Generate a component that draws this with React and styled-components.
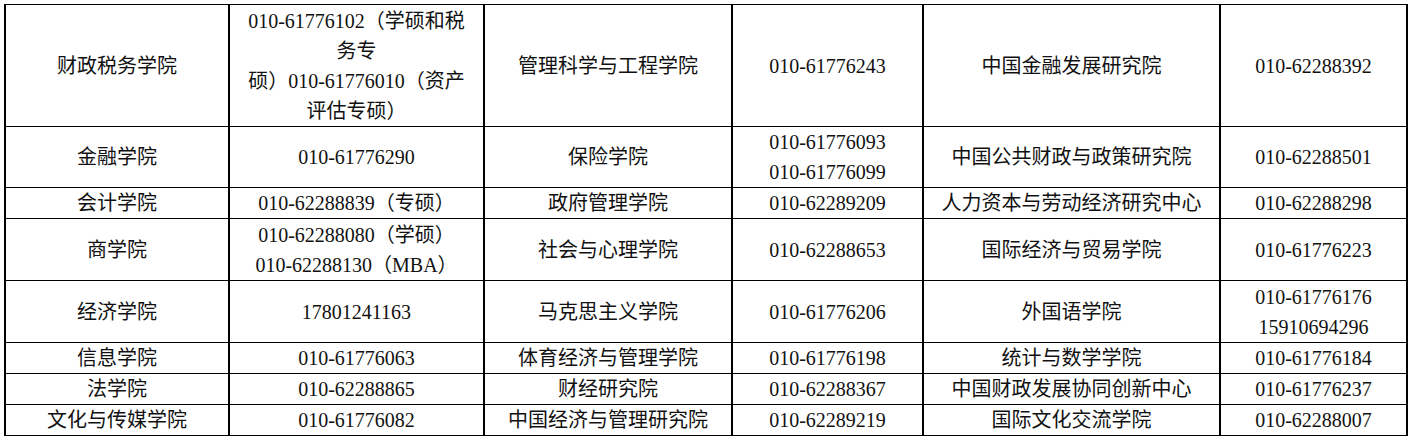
import React from "react";
import styled, { createGlobalStyle } from "styled-components";

const Global = createGlobalStyle`
  html, body { margin: 0; padding: 0; background: #fff; }
  body { font-family: "Liberation Serif", "Noto Sans CJK SC", serif; }
`;

const Page = styled.div`
  padding: 4px 0 0 4px;
`;

const Table = styled.table`
  border-collapse: collapse;
  table-layout: fixed;
  width: 1404px;
  font-size: 20px;
  line-height: 30px;
  color: #111;
`;

const Row = styled.tr`
  height: ${(p) => p.$h}px;
`;

const Cell = styled.td`
  padding: 0;
  text-align: center;
  vertical-align: middle;
  border-top: 1px solid #000;
  border-bottom: 1px solid #000;
  border-left: 2px solid #000;
  border-right: 2px solid #000;
  white-space: nowrap;
`;

const widths = [224, 255, 248, 191, 297, 187];

const rows = [
  {
    h: 122,
    cells: [
      "财政税务学院",
      ["010-61776102（学硕和税", "务专", "硕）010-61776010（资产", "评估专硕）"],
      "管理科学与工程学院",
      "010-61776243",
      "中国金融发展研究院",
      "010-62288392",
    ],
  },
  {
    h: 61,
    cells: [
      "金融学院",
      "010-61776290",
      "保险学院",
      ["010-61776093", "010-61776099"],
      "中国公共财政与政策研究院",
      "010-62288501",
    ],
  },
  {
    h: 31,
    cells: [
      "会计学院",
      "010-62288839（专硕）",
      "政府管理学院",
      "010-62289209",
      "人力资本与劳动经济研究中心",
      "010-62288298",
    ],
  },
  {
    h: 62,
    cells: [
      "商学院",
      ["010-62288080（学硕）", "010-62288130（MBA）"],
      "社会与心理学院",
      "010-62288653",
      "国际经济与贸易学院",
      "010-61776223",
    ],
  },
  {
    h: 62,
    cells: [
      "经济学院",
      "17801241163",
      "马克思主义学院",
      "010-61776206",
      "外国语学院",
      ["010-61776176", "15910694296"],
    ],
  },
  {
    h: 30,
    cells: [
      "信息学院",
      "010-61776063",
      "体育经济与管理学院",
      "010-61776198",
      "统计与数学学院",
      "010-61776184",
    ],
  },
  {
    h: 31,
    cells: [
      "法学院",
      "010-62288865",
      "财经研究院",
      "010-62288367",
      "中国财政发展协同创新中心",
      "010-61776237",
    ],
  },
  {
    h: 31,
    cells: [
      "文化与传媒学院",
      "010-61776082",
      "中国经济与管理研究院",
      "010-62289219",
      "国际文化交流学院",
      "010-62288007",
    ],
  },
];

function Content({ value }) {
  if (Array.isArray(value)) {
    return value.map((line, i) => (
      <React.Fragment key={i}>
        {i > 0 && <br />}
        {line}
      </React.Fragment>
    ));
  }
  return value;
}

export default function App() {
  return (
    <Page>
      <Global />
      <Table>
        <colgroup>
          {widths.map((w, i) => (
            <col key={i} style={{ width: w }} />
          ))}
        </colgroup>
        <tbody>
          {rows.map((r, i) => (
            <Row key={i} $h={r.h}>
              {r.cells.map((c, j) => (
                <Cell key={j}>
                  <Content value={c} />
                </Cell>
              ))}
            </Row>
          ))}
        </tbody>
      </Table>
    </Page>
  );
}
